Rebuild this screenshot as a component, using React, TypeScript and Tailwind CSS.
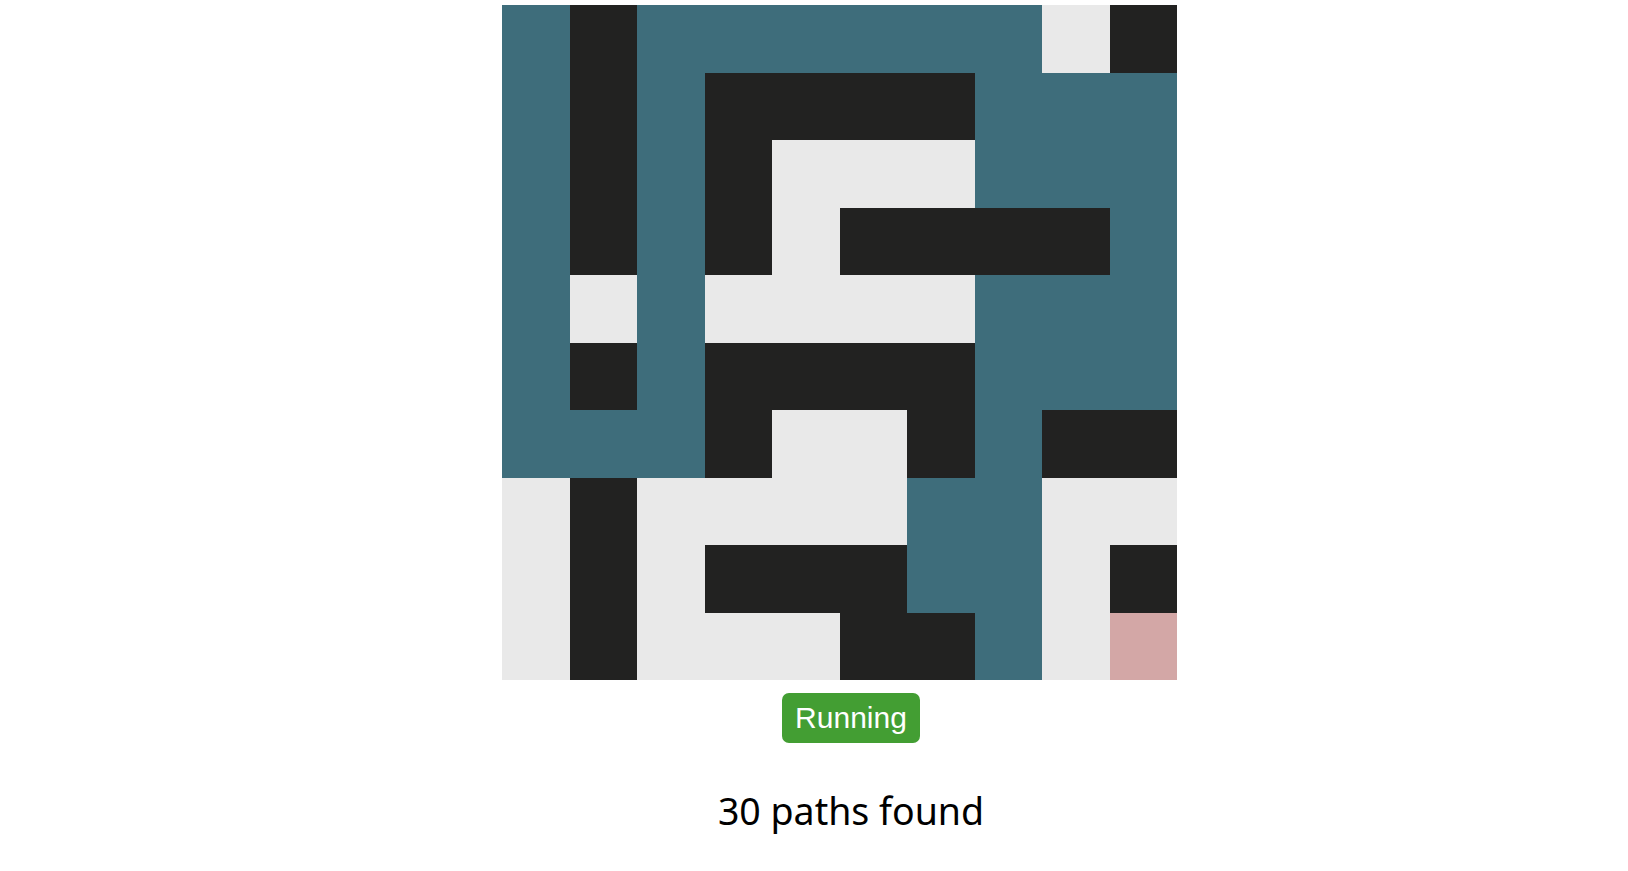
import React from "react";

// T = path, B = wall, W = open, P = goal
const maze = [
  "TBTTTTTTWB",
  "TBTBBBBTTT",
  "TBTBWWWTTT",
  "TBTBWBBBBT",
  "TWTWWWWTTT",
  "TBTBBBBTTT",
  "TTTBWWBTBB",
  "WBWWWWTTWW",
  "WBWBBBTTWB",
  "WBWWWBBTWP",
];

const cellColor: Record<string, string> = {
  T: "bg-[#3e6d7b]",
  B: "bg-[#222221]",
  W: "bg-[#e9e9e9]",
  P: "bg-[#d3a7a6]",
};

const App = () => {
  return (
    <div className="min-h-screen bg-white flex flex-col items-center pt-[5px] pl-[74px]">
      <div className="grid grid-cols-10 grid-rows-10 w-[675px] h-[675px] mr-[23px]">
        {maze.flatMap((row, r) =>
          row.split("").map((c, i) => (
            <div key={`${r}-${i}`} className={cellColor[c]} />
          ))
        )}
      </div>

      <button
        className="mt-[13px] h-[50px] px-[13px] rounded-[7px] bg-[#439e33] text-white text-[30px] leading-none"
        style={{ fontFamily: '"Liberation Sans", Arial, sans-serif' }}
      >
        Running
      </button>

      <p
        className="mt-[45px] text-[37.5px] leading-[46px] text-black"
        style={{ fontFamily: '"Noto Sans", "Open Sans", sans-serif' }}
      >
        30 paths found
      </p>
    </div>
  );
};

export default App;
